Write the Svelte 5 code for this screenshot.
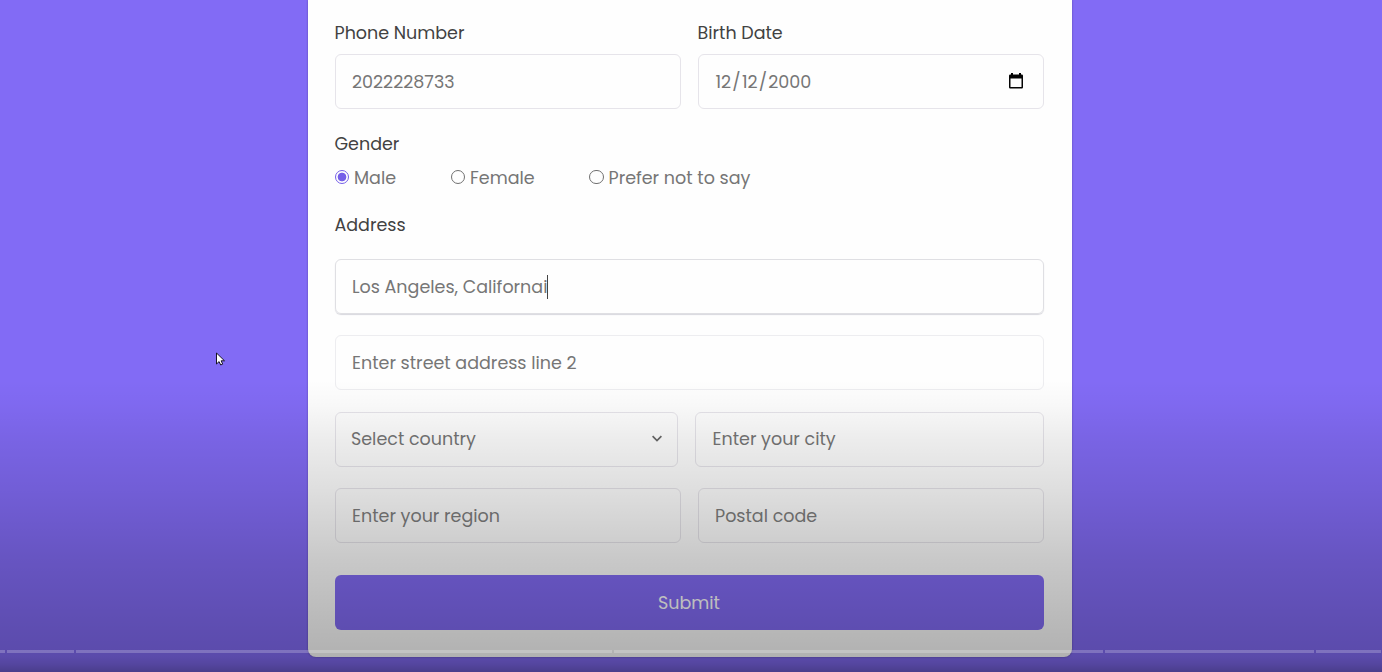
<script>
  const chapters = [5, 67, 536, 489, 209, 65];
</script>

<main class="page">
  <form class="card">
    <div class="row">
      <div class="field">
        <div class="label">Phone Number</div>
        <div class="input">2022228733</div>
      </div>
      <div class="field">
        <div class="label">Birth Date</div>
        <div class="input date">
          <span class="value"><span>12</span><span>/</span><span>12</span><span>/</span><span>2000</span></span>
          <svg class="calendar" width="16" height="17" viewBox="0 0 16 17">
            <path fill="#050505" fill-rule="evenodd" d="M3 0h2v1.500h6V0h2v1.500h.8q1.200 0 1.200 1.200v11.600q0 1.200-1.200 1.200H2.200Q1 15.500 1 14.300V2.700Q1 1.500 2.200 1.500H3zM2.500 5.500V14h11V5.500z" />
          </svg>
        </div>
      </div>
    </div>

    <div class="label gender">Gender</div>
    <div class="radios">
      <div class="option male"><i class="radio on"></i>Male</div>
      <div class="option female"><i class="radio"></i>Female</div>
      <div class="option"><i class="radio"></i>Prefer not to say</div>
    </div>

    <div class="label address">Address</div>
    <div class="stack">
      <div class="input focus">Los Angeles, Californai<i class="caret"></i></div>
      <div class="input faint">Enter street address line 2</div>
      <div class="row region">
        <div class="input select">
          Select country
          <svg width="12" height="8" viewBox="0 0 12 8"><path d="M1.600 1.200 6 5.500l4.400-4.300" fill="none" stroke="#686868" stroke-width="1.700" /></svg>
        </div>
        <div class="input">Enter your city</div>
      </div>
      <div class="row low">
        <div class="input">Enter your region</div>
        <div class="input">Postal code</div>
      </div>
    </div>
    <div class="submit">Submit</div>
  </form>

  <div class="shade"></div>
  <div class="timeline">
    {#each chapters as width}<i style="width: {width}px"></i>{/each}
  </div>
  <svg class="pointer" width="11" height="15" viewBox="0 0 11 15">
    <path d="M1.500 1v11l2.600-2.400L5.700 13l2-.9-1.600-3.300H9.500z" fill="#fff" stroke="#171326" stroke-width="1" />
  </svg>
</main>

<style>
  :global(body) { margin: 0; overflow: hidden; }
  .page {
    position: relative;
    box-sizing: border-box;
    width: 1382px;
    height: 672px;
    padding-left: 308px;
    overflow: hidden;
    background: #826bf5;
    font-family: Poppins, Inter, sans-serif;
    font-size: 17.500px;
    font-weight: 400;
    font-feature-settings: 'cv11';
    white-space: nowrap;
    color: #767676;
  }
  .card {
    box-sizing: border-box;
    width: 763.500px;
    height: 657px;
    padding: 20px 28px 0 26.500px;
    background: #fefefe;
    border-radius: 0 0 8px 8px;
    box-shadow: 0 0 2px rgba(40, 30, 70, 0.5);
  }
  .row { display: grid; grid-template-columns: 1fr 1fr; gap: 17px; }
  .row.region { grid-template-columns: 343.500px 1fr; }
  .label { height: 26px; line-height: 26px; color: #424242; }
  .input {
    display: flex;
    align-items: center;
    box-sizing: border-box;
    height: 55px;
    padding: 0 16.500px;
    border: 1px solid #e6e4ea;
    border-radius: 6px;
  }
  .field .input { margin-top: 8px; }
  .date { justify-content: space-between; padding-left: 17px; }
  .value { display: flex; gap: 1.200px; }
  .calendar { margin-right: 2px; }
  .gender { margin-top: 22px; }
  .radios { display: flex; height: 26px; margin-top: 8px; }
  .option { display: flex; align-items: center; gap: 5px; line-height: 26px; }
  .male { width: 116px; }
  .female { width: 138.500px; }
  .radio {
    box-sizing: border-box;
    width: 14.500px;
    height: 14.500px;
    flex: none;
    border: 1px solid #707070;
    border-radius: 50%;
    position: relative;
    top: -1px;
  }
  .on { border-color: #755fe8; background: radial-gradient(circle, #755fe8 4px, transparent 4.700px); }
  .address { margin-top: 21px; }
  .stack { display: grid; gap: 21.400px; margin-top: 21px; }
  .focus { border-color: #dfdfe3; box-shadow: 0 1px 1px #d8d8de; }
  .faint { border-color: #ededf0; }
  .low .input { color: #7e7e7e; }
  .caret { width: 1px; height: 24px; background: #444; }
  .select { justify-content: space-between; padding: 0 14.500px 0 15.500px; }
  .submit {
    display: flex;
    align-items: center;
    justify-content: center;
    height: 54.500px;
    margin-top: 32.300px;
    border-radius: 6px;
    background: #826bf5;
    color: #fff;
  }
  .shade {
    position: absolute;
    inset: 380px 0 0;
    background: linear-gradient(rgba(0,0,0,0), rgba(0,0,0,0.025) 25px, rgba(0,0,0,0.070) 60px, rgba(0,0,0,0.125) 110px, rgba(0,0,0,0.210) 180px, rgba(0,0,0,0.270) 240px, rgba(0,0,0,0.300) 276px, rgba(0,0,0,0.350) 284px, rgba(0,0,0,0.430) 292px);
  }
  .timeline { position: absolute; left: 0; top: 650px; display: flex; gap: 2px; }
  .timeline i { flex: none; height: 3px; background: rgba(255,255,255,0.220); }
  .pointer { position: absolute; left: 215px; top: 352px; }
</style>
